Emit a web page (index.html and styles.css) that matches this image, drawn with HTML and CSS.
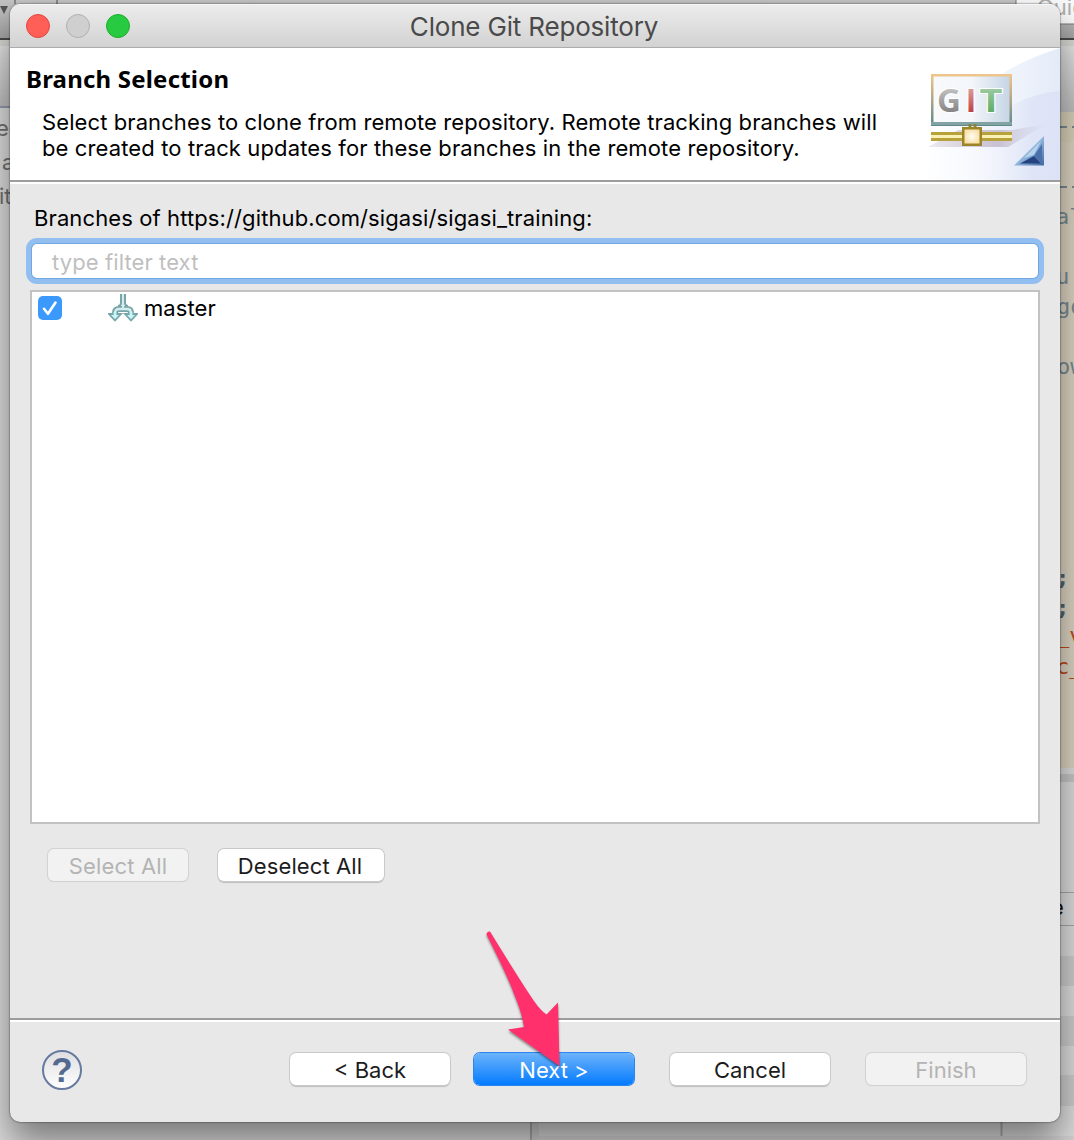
FILE: index.html
```html
<!DOCTYPE html>
<html lang="en">
<head>
<meta charset="utf-8">
<title>Clone Git Repository</title>
<link rel="stylesheet" href="styles.css">
</head>
<body>
<div class="desktop">
  <svg class="backdrop" width="1074" height="1140" viewBox="0 0 1074 1140" aria-hidden="true">
    <defs>
      <linearGradient id="bar" x1="0" y1="0" x2="0" y2="1"><stop offset="0" stop-color="#c4c4c4"/><stop offset="1" stop-color="#a5a5a5"/></linearGradient>
      <linearGradient id="tab" x1="0" y1="0" x2="0" y2="1"><stop offset="0" stop-color="#e6e6e6"/><stop offset="1" stop-color="#bebebe"/></linearGradient>
    </defs>
    <rect width="1074" height="1140" fill="#dcdcdc"/>
    <rect width="1074" height="39" fill="url(#bar)"/>
    <path d="M0 6h8l-4 8z" fill="#555"/>
    <path d="M15 0v4M57 0v4" stroke="#888" stroke-width="2"/>
    <rect y="38" width="1074" height="2" fill="#4a4a4a"/>
    <rect y="40" width="1074" height="6" fill="#d8d8d4"/>
    <rect y="46" width="12" height="61" fill="url(#tab)"/>
    <rect y="106" width="12" height="2" fill="#9298ae"/>
    <g class="tree-text"><text x="-4" y="136">ec</text><text x="2" y="170">a</text><text x="-1" y="204">it</text></g>
    <rect x="1016" y="-4" width="62" height="28" fill="#fafafa" stroke="#777"/>
    <text class="quick" x="1037" y="15">Quick</text>
    <rect x="1056" y="46" width="18" height="66" fill="url(#tab)"/>
    <rect x="1056" y="112" width="18" height="656" fill="#dcd4c2"/>
    <rect x="1056" y="112" width="18" height="30" fill="#d8d0b8"/>
    <path d="M1056 127h11m5 0h4M1056 187h11m5 0h4" stroke="#788b92" stroke-width="2"/>
    <g class="code"><text x="1056" y="224">al</text><text x="1056" y="284">u</text><text x="1057" y="314">go</text><text x="1057" y="374">ow</text></g>
    <g class="code code-punct"><text x="1056" y="585">;</text><text x="1056" y="615">;</text></g>
    <g class="code code-red"><text x="1056" y="643">_v</text><text x="1056" y="674">c_</text></g>
    <rect x="1056" y="774" width="18" height="8" fill="#c6c6c6"/>
    <rect x="1056" y="892" width="18" height="1" fill="#a5a5a5"/>
    <rect x="1056" y="925" width="18" height="1" fill="#a5a5a5"/>
    <text class="cell" x="1051" y="915">e</text>
    <path d="M1056 956h18v30h-18zM1056 1016h18v30h-18zM1056 1075h18v31h-18z" fill="#cdcdcd"/>
    <rect x="515" y="1115" width="7" height="25" fill="#dcdcdc"/>
    <rect x="531" y="1115" width="8" height="25" fill="#d0d0d0"/>
    <path d="M531 1115v25M1001.500 1115v25" stroke="#aaa" stroke-width="2"/>
    <rect x="539" y="1136" width="535" height="4" fill="#d3d3d3"/>
  </svg>

  <main class="dialog">
    <header class="titlebar">
      <div class="lights"><i class="light close"></i><i class="light minimize"></i><i class="light expand"></i></div>
      <div class="title"><span>Clone Git Repository</span></div>
    </header>

    <section class="banner">
      <div class="banner-text">
        <h1>Branch Selection</h1>
        <p><span class="line line-one">Select branches to clone from remote repository. Remote tracking branches will</span><br><span class="line line-two">be created to track updates for these branches in the remote repository.</span></p>
      </div>
      <svg class="git-art" width="150" height="132" viewBox="910 48 150 132">
        <defs>
          <linearGradient id="swoosh" x1="0" y1="0" x2="1" y2="0"><stop offset="0" stop-color="#fff"/><stop offset=".5" stop-color="#f4f7fd"/><stop offset="1" stop-color="#e4ebf8"/></linearGradient>
          <linearGradient id="swoosh2" x1="0" y1="0" x2="1" y2="0"><stop offset="0" stop-color="#fff" stop-opacity="0"/><stop offset=".75" stop-color="#dfe5f7"/><stop offset="1" stop-color="#dde3f6"/></linearGradient>
          <linearGradient id="screen" x1="0" y1="0" x2="1" y2="0"><stop offset="0" stop-color="#f8fafc"/><stop offset=".5" stop-color="#f3f6fa"/><stop offset="1" stop-color="#c5d4e5"/></linearGradient>
          <linearGradient id="frame" x1="0" y1="0" x2="0" y2="1"><stop offset="0" stop-color="#efc58b"/><stop offset=".45" stop-color="#b6a889"/><stop offset="1" stop-color="#5f898b"/></linearGradient>
          <linearGradient id="shade" x1="0" y1="0" x2="1" y2="0"><stop offset="0" stop-color="#c8bccb" stop-opacity=".3"/><stop offset=".6" stop-color="#c9c1d4"/><stop offset="1" stop-color="#d0d2e6" stop-opacity=".1"/></linearGradient>
          <linearGradient id="gg" x1="0" y1="0" x2="0" y2="1"><stop offset=".25" stop-color="#c2c2c2"/><stop offset=".8" stop-color="#828282"/></linearGradient>
          <linearGradient id="gi" x1="0" y1="0" x2="0" y2="1"><stop offset=".25" stop-color="#d99696"/><stop offset=".8" stop-color="#bd4349"/></linearGradient>
          <linearGradient id="gt" x1="0" y1="0" x2="0" y2="1"><stop offset=".25" stop-color="#9ccba2"/><stop offset=".8" stop-color="#5aab64"/></linearGradient>
          <linearGradient id="tri" x1="0" y1="0" x2="1" y2="1"><stop offset=".4" stop-color="#a3c8ea"/><stop offset="1" stop-color="#4168a0"/></linearGradient>
          <radialGradient id="node"><stop offset="0" stop-color="#fffdf2"/><stop offset="1" stop-color="#f8dea2"/></radialGradient>
        </defs>
        <path d="M922 180Q950 82 1060 48v132z" fill="url(#swoosh)"/>
        <path d="M950 180Q985 98 1060 91v89z" fill="url(#swoosh2)"/>
        <path d="M928 147L958 130H1012L1046 124L1008 147z" fill="url(#shade)"/>
        <rect x="932.250" y="75.250" width="78.500" height="49.500" fill="url(#screen)" stroke="url(#frame)" stroke-width="2.500"/>
        <path d="M931 123.500h81" stroke="#83a3a2" stroke-width="3"/>
        <g class="git-letters"><text x="937" y="112" fill="url(#gg)" textLength="24" lengthAdjust="spacingAndGlyphs">G</text><text class="letter-i" x="971" y="112" fill="url(#gi)">I</text><text x="979.500" y="112" fill="url(#gt)" textLength="23" lengthAdjust="spacingAndGlyphs">T</text></g>
        <rect x="931" y="132" width="81" height="9" fill="#b6a13a"/>
        <rect x="931" y="135" width="81" height="3" fill="#f9f2b4"/>
        <path d="M970 124v5m5-5v5" stroke="#88823b" stroke-width="3"/>
        <rect x="963.250" y="128.250" width="17.500" height="16.500" fill="url(#node)" stroke="#9c842b" stroke-width="2.500"/>
        <path d="M1014 165.500L1044 136v29.500z" fill="url(#tri)"/>
        <path d="M1020 163.500L1034 156L1041 163.500z" fill="#23427f"/>
        <path d="M1034 156L1042 144V163z" fill="#4a70ab"/>
        <path d="M1024 158L1041 141L1034 155z" fill="#c3dcf2" opacity=".8"/>
      </svg>
    </section>

    <section class="content">
      <label class="caption"><span>Branches of https://github.com/sigasi/sigasi_training:</span></label>
      <div class="filter"><span>type filter text</span></div>
      <div class="tree">
        <div class="row">
          <svg class="check" width="24" height="24" viewBox="0 0 24 24"><rect width="24" height="24" rx="5" fill="#3b99fc"/><path d="M6 12.800l4 5L17.500 6.500" fill="none" stroke="#fff" stroke-width="2.600" stroke-linecap="round" stroke-linejoin="round"/></svg>
          <svg class="branch" width="30" height="28" viewBox="0 0 30 28"><path d="M13 0v9q0 3-3 3M17 0v9q0 3 3 3" fill="none" stroke="#78a5a9" stroke-width="2"/><path d="M7 21v-2q0-4 4-4h8q4 0 4 4v2" fill="none" stroke="#78a5a9" stroke-width="6"/><path d="M15 0v14" stroke="#d3eced" stroke-width="2"/><path d="M7 21v-2q0-4 4-4h8q4 0 4 4v2" fill="none" stroke="#d3eced" stroke-width="2.400"/><path d="M1 20h12L7 26.500zM17 20h12L23 26.500z" fill="#c7f5f6" stroke="#78a5a9" stroke-width="1.800"/><path d="M5.600 18h2.800v4h-2.800zM21.600 18h2.800v4h-2.800z" fill="#c7f5f6"/></svg>
          <span class="branch-name">master</span>
        </div>
      </div>
      <div class="selection-actions">
        <button class="button select" disabled><span>Select All</span></button>
        <button class="button deselect"><span>Deselect All</span></button>
      </div>
    </section>

    <footer class="footer">
      <svg class="help" width="42" height="42" viewBox="0 0 42 42"><defs><linearGradient id="h" x1="0" y1="0" x2="0" y2="1"><stop offset="0" stop-color="#dedee1"/><stop offset="1" stop-color="#fff"/></linearGradient></defs><circle cx="21" cy="21" r="19" fill="url(#h)" stroke="#667a9e" stroke-width="2"/><text class="help-mark" x="21" y="33">?</text></svg>
      <nav class="wizard-actions">
        <button class="button back"><span>&lt; Back</span></button>
        <button class="button primary"><span>Next &gt;</span></button>
        <button class="button"><span>Cancel</span></button>
        <button class="button" disabled><span>Finish</span></button>
      </nav>
    </footer>
  </main>

  <svg class="pointer" width="90" height="150" viewBox="480 925 90 150"><path d="M486.500 934.500Q487 931 490 931.500Q521 982 534 1001Q541 1011 546.500 1014.500L558 1002.500L559.500 1066L508 1029.500L524 1027Q522 1013 514 994Q508 977 486.500 934.500Z" fill="#ff306c"/></svg>
</div>
</body>
</html>
```
FILE: styles.css
```css
* { box-sizing: border-box; }
body { margin: 0; font-family: Inter, "Liberation Sans", sans-serif; font-size: 22px; color: #000; }
.desktop { position: relative; width: 1074px; height: 1140px; padding: 4px 14px 0 10px; overflow: hidden; }
.backdrop { position: absolute; inset: 0; }
.tree-text { font-size: 22px; fill: #707070; }
.quick { font-size: 22px; fill: #b0b0b0; }
.code { font: 22px "DejaVu Sans Mono", monospace; fill: #788b92; }
.code-punct { font-weight: bold; fill: #4b6472; }
.code-red { fill: #bc4a1c; }
.cell { font-size: 22px; fill: #111; }

.dialog { position: relative; display: flex; flex-direction: column; width: 1050px; height: 1118px; border-radius: 10px; background: #e8e8e8; overflow: hidden; box-shadow: 0 0 2px rgba(0,0,0,.75), 0 20px 36px rgba(0,0,0,.45); }
.titlebar { display: grid; grid-template-columns: 108px 1fr 108px; align-items: center; height: 44px; padding: 0 16px; background: linear-gradient(#ececec, #d2d2d2); border-top: 1px solid #f5f5f5; border-bottom: 1px solid #acacac; }
.lights { display: flex; gap: 16px; margin-top: -1px; }
.light { width: 24px; height: 24px; border-radius: 50%; border: 1px solid; }
.close { background: #ff5f57; border-color: #e2463f; }
.minimize { background: #cfcfcf; border-color: #b0b0b0; }
.expand { background: #28ca41; border-color: #1dad2b; }
.title { padding: 1px 2px 0 0; text-align: center; font-size: 26px; line-height: 42px; letter-spacing: -.18px; color: #4a4a4a; }

.banner { display: flex; justify-content: space-between; height: 134px; background: #fff; border-bottom: 2px solid #9d9d9d; padding-left: 16px; }
.banner-text { white-space: nowrap; padding-top: 15px; }
h1 { margin: 0; font: bold 24px/32px "Noto Sans", "Open Sans", sans-serif; letter-spacing: .2px; }
p { margin: 14px 0 0 16px; line-height: 26px; }
.line-one { letter-spacing: .095px; }
.line-two { letter-spacing: .125px; }
.git-art { flex: none; }
.git-letters { font: bold 33px "Noto Sans", sans-serif; stroke: #fff; stroke-width: 2px; paint-order: stroke; }
.letter-i { font-family: "Liberation Sans", sans-serif; font-size: 34px; text-anchor: middle; }

.content { flex: 1; border-top: 2px solid #fff; border-bottom: 2px solid #9d9d9d; padding: 20px 20px 0; }
.caption { display: block; margin-left: 4px; line-height: 28px; letter-spacing: .11px; }
.filter { height: 34px; margin: 12px 2px 0; padding-left: 20px; line-height: 36px; letter-spacing: .1px; border-radius: 5px; background: #fff; color: #bfbfbf; box-shadow: 0 0 0 1px #72a8e0, 0 0 0 6px #93bff0; }
.tree { height: 534px; margin-top: 12px; border: 2px solid #c2c2c2; background: #fff; }
.row { display: flex; align-items: center; height: 32px; padding-left: 6px; }
.branch { margin-left: 46px; }
.branch-name { margin-left: 6px; letter-spacing: .1px; }
.selection-actions { display: flex; gap: 30px; padding: 25px 0 0 18px; }

.button { display: block; width: 160px; height: 32px; padding: 0; border: 0; border-radius: 6px; background: #fff; color: #1c1c1c; font: inherit; line-height: 34px; box-shadow: 0 0 0 1px #c9c9c9, 0 2px 1px rgba(0,0,0,.18); }
.button:disabled { background: #f2f2f2; color: #b4b4b4; box-shadow: 0 0 0 1px #d2d2d2, 0 1px 1px #d0d0d0; }
.select { width: 140px; letter-spacing: .15px; }
.deselect { width: 166px; padding-right: 2px; letter-spacing: .1px; }
.back { margin-right: -12px; }
.primary { background: linear-gradient(#6cb3fa, #047bff); color: #fff; box-shadow: 0 0 0 1px #2a85ef; }

.footer { display: flex; justify-content: space-between; height: 102px; border-top: 2px solid #fff; padding: 27px 34px 0 31px; }
.help-mark { font: bold 35px "Liberation Sans", sans-serif; text-anchor: middle; fill: #526a91; }
.wizard-actions { display: flex; gap: 36px; padding-top: 4px; }
.pointer { position: absolute; left: 480px; top: 925px; filter: drop-shadow(0 2px 1px rgba(0,0,0,.4)); }
```
